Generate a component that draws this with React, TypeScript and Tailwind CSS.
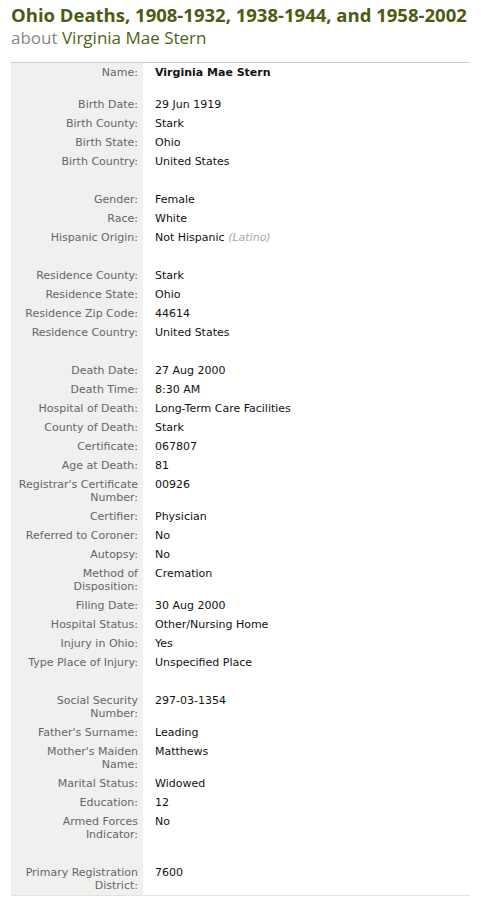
import React from "react";

type Row = [string, string, string?] | null | "s13";

const rows: Row[] = [
  ["Name:", "Virginia Mae Stern"],
  "s13",
  ["Birth Date:", "29 Jun 1919"],
  ["Birth County:", "Stark"],
  ["Birth State:", "Ohio"],
  ["Birth Country:", "United States"],
  null,
  ["Gender:", "Female"],
  ["Race:", "White"],
  ["Hispanic Origin:", "Not Hispanic", "(Latino)"],
  null,
  ["Residence County:", "Stark"],
  ["Residence State:", "Ohio"],
  ["Residence Zip Code:", "44614"],
  ["Residence Country:", "United States"],
  null,
  ["Death Date:", "27 Aug 2000"],
  ["Death Time:", "8:30 AM"],
  ["Hospital of Death:", "Long-Term Care Facilities"],
  ["County of Death:", "Stark"],
  ["Certificate:", "067807"],
  ["Age at Death:", "81"],
  ["Registrar's Certificate Number:", "00926"],
  ["Certifier:", "Physician"],
  ["Referred to Coroner:", "No"],
  ["Autopsy:", "No"],
  ["Method of Disposition:", "Cremation"],
  ["Filing Date:", "30 Aug 2000"],
  ["Hospital Status:", "Other/Nursing Home"],
  ["Injury in Ohio:", "Yes"],
  ["Type Place of Injury:", "Unspecified Place"],
  null,
  ["Social Security Number:", "297-03-1354"],
  ["Father's Surname:", "Leading"],
  ["Mother's Maiden Name:", "Matthews"],
  ["Marital Status:", "Widowed"],
  ["Education:", "12"],
  ["Armed Forces Indicator:", "No"],
  null,
  ["Primary Registration District:", "7600"],
];

export default function App() {
  return (
    <div className="bg-white w-[481px] min-h-[898px] pl-[11px] pt-[3px]" style={{ fontFamily: "'DejaVu Sans', Verdana, sans-serif" }}>
      <h1
        className="text-[18.5px] leading-[24px] font-bold text-[#4b5c12] whitespace-nowrap"
        style={{ fontFamily: "'Open Sans', sans-serif" }}
      >
        Ohio Deaths, 1908-1932, 1938-1944, and 1958-2002
      </h1>
      <div className="text-[17px] leading-[22px] text-[#888888] whitespace-nowrap" style={{ fontFamily: "'Open Sans', sans-serif" }}>
        about <span className="text-[#4b6418]">Virginia Mae Stern</span>
      </div>
      <div className="mt-[13px] w-[459px] border-t border-[#cccccc] border-b border-b-[#e6e4d6]">
        {rows.map((r, i) => {
          if (r === null || r === "s13") {
            const h = r === null ? "h-[19px]" : "h-[13px]";
            return (
              <div key={i} className={`flex ${h}`}>
                <div className="w-[132px] bg-[#f0f0f0]" />
              </div>
            );
          }
          const [label, value, extra] = r;
          return (
            <div key={i} className="flex text-[11px] leading-[13px]">
              <div className="w-[132px] shrink-0 bg-[#f0f0f0] text-right text-[#666666] pr-[5px] py-[3px] pl-[4px]">{label}</div>
              <div className={`pl-[12px] py-[3px] text-[#111111] ${i === 0 ? "font-bold" : ""}`}>
                {value}
                {extra && <span className="italic text-[#aaaaaa]"> {extra}</span>}
              </div>
            </div>
          );
        })}
      </div>
    </div>
  );
}
